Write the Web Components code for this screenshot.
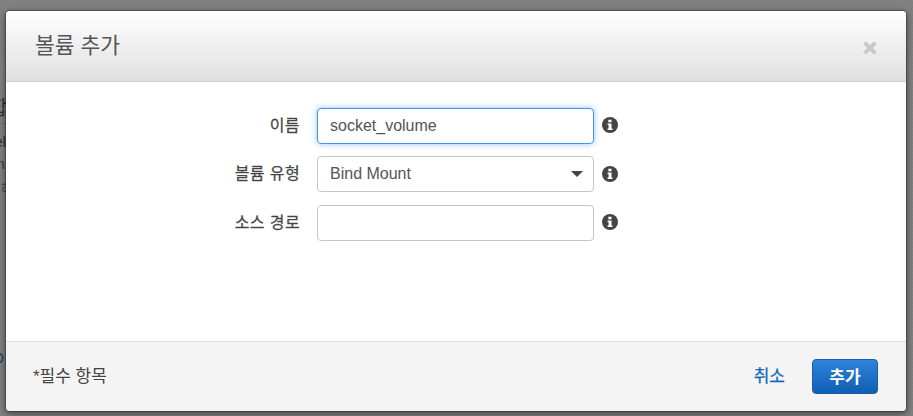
<!DOCTYPE html>
<html lang="ko">
<head>
<meta charset="utf-8">
<style>
    html, body { margin: 0; height: 100%; }
    body {
        background: #808080;
        overflow: hidden;
        font-family: "Liberation Sans", "Noto Sans CJK KR", sans-serif;
    }
    .cancel { color: #0f67b8; font-size: 17px; -webkit-text-stroke: .25px #0f67b8; position: relative; top: -2px; }
    .note { position: relative; top: -2px; }
</style>
</head>
<body>
<console-backdrop>
    <volume-modal heading="볼륨 추가">
        <form-row label="이름">
            <text-field value="socket_volume" focused></text-field>
        </form-row>
        <form-row label="볼륨 유형">
            <select-field value="Bind Mount"></select-field>
        </form-row>
        <form-row label="소스 경로">
            <text-field></text-field>
        </form-row>
        <span slot="note" class="note">*필수 항목</span>
        <a slot="actions" class="cancel">취소</a>
        <primary-button slot="actions">추가</primary-button>
    </volume-modal>
</console-backdrop>

<script>
class ConsoleBackdrop extends HTMLElement {
    constructor() {
        super();
        this.attachShadow({ mode: 'open' });
        this.shadowRoot.innerHTML = `
            <style>
                :host {
                    display: block;
                    position: relative;
                    width: 913px;
                    height: 416px;
                    padding: 11px 7px 5px 6px;
                    box-sizing: border-box;
                    /* the overlay is a fine dither over the page */
                    background: repeating-conic-gradient(#7b7b7b 0 25%, #858585 0 50%) 0 0 / 2px 2px;
                    overflow: hidden;
                }
                /* page text showing through on the left of the dialog */
                .behind { position: absolute; left: 0; top: 0; width: 6px; height: 416px; overflow: hidden; color: #333; font-size: 14px; }
                .behind span { position: absolute; white-space: nowrap; }
                .behind hr { position: absolute; left: 0; top: 123px; width: 6px; margin: 0; border: 0; border-top: 1px solid #6f6f6f; }
            </style>
            <div class="behind">
                <span style="left:-11px;top:92px;font-size:20px">합</span>
                <hr>
                <span style="left:-5px;top:134px;color:#3b2a14">el</span>
                <span style="left:-7px;top:156px;color:#1e3a55">m</span>
                <span style="left:1px;top:180px;font-size:11px;color:#30455a">하</span>
                <span style="left:-7px;top:350px;color:#1e3a55">O</span>
            </div>
            <slot></slot>
        `;
    }
}

class VolumeModal extends HTMLElement {
    constructor() {
        super();
        this.attachShadow({ mode: 'open' });
    }

    connectedCallback() {
        const heading = this.getAttribute('heading') || '';
        this.shadowRoot.innerHTML = `
            <style>
                :host {
                    display: flex;
                    flex-direction: column;
                    position: relative;
                    width: 900px;
                    height: 400px;
                    background: #fff;
                    border-radius: 4px;
                    box-shadow: 0 0 0 1px rgba(0,0,0,.25), 0 2px 6px 1px rgba(0,0,0,.45);
                    overflow: hidden;
                }
                header {
                    display: flex;
                    align-items: center;
                    justify-content: space-between;
                    height: 70px;
                    padding: 0 29px 0 29px;
                    background: linear-gradient(#fff, #e0e0e0);
                    border-bottom: 1px solid #ccc;
                }
                h2 { margin: 0 0 6px; font-size: 21.5px; font-weight: 400; color: #555; }
                .close { width: 14px; height: 14px; display: block; margin-top: 3px; }
                main {
                    flex: 1;
                    padding: 25.9px 0 0;
                    display: flex;
                    flex-direction: column;
                    gap: 12.5px;
                }
                footer {
                    display: flex;
                    align-items: center;
                    justify-content: space-between;
                    height: 69px;
                    padding: 0 28px 0 27px;
                    background: #f4f4f4;
                    border-top: 1px solid #ddd;
                    font-size: 17px;
                    color: #444;
                }
                .actions { display: flex; align-items: center; gap: 27px; }
            </style>
            <header>
                <h2>${heading}</h2>
                <svg class="close" viewBox="0 0 14 14"><path d="M3 1.2 7 5.2 11 1.2 12.8 3 8.8 7 12.8 11 11 12.8 7 8.8 3 12.8 1.2 11 5.2 7 1.2 3Z" fill="#c9c9c9" stroke="#c9c9c9" stroke-width="1.5" stroke-linejoin="round"/></svg>
            </header>
            <main><slot></slot></main>
            <footer>
                <slot name="note"></slot>
                <div class="actions"><slot name="actions"></slot></div>
            </footer>
        `;
    }
}

class FormRow extends HTMLElement {
    constructor() {
        super();
        this.attachShadow({ mode: 'open' });
    }

    connectedCallback() {
        const label = this.getAttribute('label') || '';
        this.shadowRoot.innerHTML = `
            <style>
                :host {
                    display: grid;
                    grid-template-columns: 294px 277px 16px;
                    align-items: center;
                    height: 36px;
                }
                label {
                    font-size: 16px;
                    color: #444;
                    text-align: right;
                    -webkit-text-stroke: .25px #444;
                    letter-spacing: .4px;
                    position: relative;
                    top: -2px;
                }
                .field { margin-left: 17px; }
                svg { display: block; width: 16px; height: 16px; margin: -1px 0 0 25px; }
            </style>
            <label>${label}</label>
            <div class="field"><slot></slot></div>
            <svg viewBox="0 0 16 16">
                <circle cx="8" cy="8" r="8" fill="#444"/>
                <path d="M6.3 2.8h3.2v2.5H6.3zM5.6 6.4h3.9v5h1v1.7H5.6v-1.7h1V8.1h-1z" fill="#fff"/>
            </svg>
        `;
    }
}

class TextField extends HTMLElement {
    constructor() {
        super();
        this.attachShadow({ mode: 'open' });
    }

    connectedCallback() {
        const focused = this.hasAttribute('focused');
        this.shadowRoot.innerHTML = `
            <style>
                :host { display: block; }
                input {
                    display: block;
                    width: 277px;
                    height: 36px;
                    box-sizing: border-box;
                    padding: 0 12px;
                    border: 1px solid ${focused ? '#3f94ea' : '#c6c6c6'};
                    border-radius: 4px;
                    font: 16px "Liberation Sans", sans-serif;
                    color: #555;
                    background: #fff;
                    outline: 0;
                    box-shadow: ${focused ? '0 0 6px rgba(64,150,235,.55)' : 'none'};
                }
            </style>
            <input type="text" value="${this.getAttribute('value') || ''}">
        `;
    }
}

class SelectField extends HTMLElement {
    constructor() {
        super();
        this.attachShadow({ mode: 'open' });
    }

    connectedCallback() {
        this.shadowRoot.innerHTML = `
            <style>
                :host {
                    display: flex;
                    align-items: center;
                    justify-content: space-between;
                    width: 277px;
                    height: 36px;
                    box-sizing: border-box;
                    padding: 0 10px 0 12px;
                    border: 1px solid #c6c6c6;
                    border-radius: 4px;
                    font-size: 16px;
                    color: #555;
                    background: #fff;
                }
                i { width: 0; height: 0; border: 6px solid transparent; border-top-color: #444; border-bottom: 0; }
            </style>
            <span>${this.getAttribute('value') || ''}</span>
            <i></i>
        `;
    }
}

class PrimaryButton extends HTMLElement {
    constructor() {
        super();
        this.attachShadow({ mode: 'open' });
        this.shadowRoot.innerHTML = `
            <style>
                :host {
                    display: flex;
                    align-items: center;
                    justify-content: center;
                    width: 66px;
                    height: 35px;
                    box-sizing: border-box;
                    border: 1px solid #1660ac;
                    border-radius: 4px;
                    background: linear-gradient(#2f83dc, #0f5fb4);
                    color: #fff;
                    font-size: 17px;
                    font-weight: 700;
                    padding-bottom: 3px;
                }
            </style>
            <slot></slot>
        `;
    }
}

customElements.define('console-backdrop', ConsoleBackdrop);
customElements.define('volume-modal', VolumeModal);
customElements.define('form-row', FormRow);
customElements.define('text-field', TextField);
customElements.define('select-field', SelectField);
customElements.define('primary-button', PrimaryButton);
</script>
</body>
</html>
